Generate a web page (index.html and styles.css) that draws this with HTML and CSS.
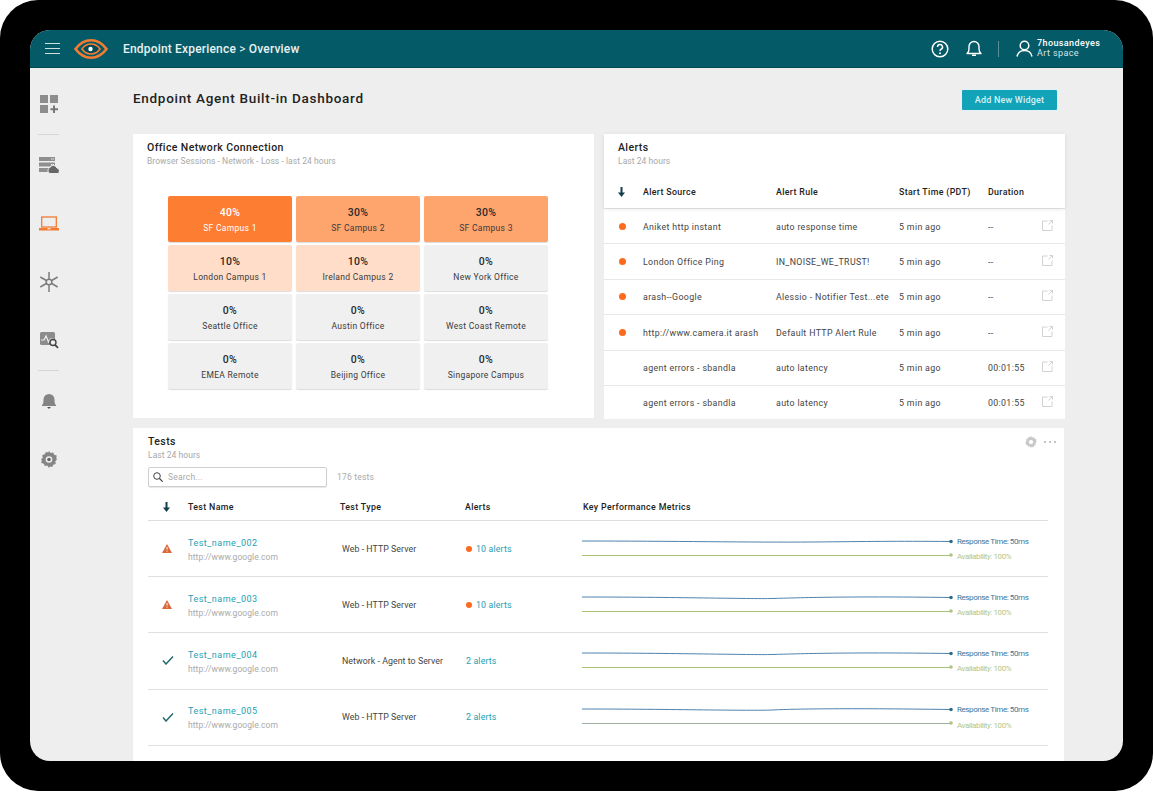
FILE: index.html
```html
<!DOCTYPE html>
<html lang="en">
<head>
<meta charset="utf-8">
<title>Endpoint Agent Built-in Dashboard</title>
<link rel="stylesheet" href="styles.css">
</head>
<body>
<div class="frame">
<div class="screen">
  <header class="topbar">
    <svg class="burger" width="15" height="11" viewBox="0 0 15 11"><path d="M0 .5h15M0 5.500h15M0 10.500h15" stroke="#cfe0e3" fill="none"/></svg>
    <svg class="logo" width="34" height="20" viewBox="0 0 34 20" fill="none"><path d="M1.500 10 C6 4 11 1.300 17 1.300 C23 1.300 28 4 32.500 10 C28 16 23 18.700 17 18.700 C11 18.700 6 16 1.500 10Z" stroke="#f47b32" stroke-width="2.600"/><path d="M8 10c2.300-3.300 5.500-5 9-5s6.700 1.700 9 5c-2.300 3.300-5.500 5-9 5s-6.700-1.700-9-5Z" fill="#034a55" stroke="#f47b32" stroke-width="1.700"/><circle cx="16.500" cy="10" r="2.200" fill="#fff"/></svg>
    <div class="crumb">Endpoint Experience <span class="crumb-sep">&gt;</span> Overview</div>
    <div class="top-actions">
      <svg width="18" height="18" viewBox="0 0 18 18" fill="none"><circle cx="9" cy="9" r="7.800" stroke="#fff" stroke-width="1.500"/><path d="M6.500 7a2.500 2.500 0 1 1 3.700 2.200c-.8.500-1.200.9-1.200 1.800" stroke="#fff" stroke-width="1.500"/><circle cx="9" cy="13.300" r="1" fill="#fff"/></svg>
      <svg class="bell-top" width="16" height="17" viewBox="0 0 16 17" fill="none"><path d="M1 13.500c1.500-1 2-2.500 2-4.500V6.500a5 5 0 0 1 10 0V9c0 2 .5 3.500 2 4.500Z" stroke="#fff" stroke-width="1.400" stroke-linejoin="round"/><path d="M6 15.300h4" stroke="#fff" stroke-width="1.500"/></svg>
      <span class="top-sep"></span>
      <svg class="user-ic" width="17" height="17" viewBox="0 0 17 17" fill="none"><circle cx="8.500" cy="5.500" r="4.300" stroke="#fff" stroke-width="1.500"/><path d="M1 16.500c.8-3.800 3.500-6 7.500-6s6.700 2.200 7.500 6" stroke="#fff" stroke-width="1.500"/></svg>
      <div class="user"><div class="user-name">7housandeyes</div><div class="user-org">Art space</div></div>
    </div>
  </header>
  <div class="body">
    <nav class="side">
      <div class="nav-slot"><svg width="20" height="20" viewBox="0 0 20 20"><path fill="#8d8d8d" d="M1 1h8v8H1zM11 1h8v8h-8zM1 11h8v8H1z"/><path d="M15 11.500v7.500M11.500 15.200h7.500" stroke="#777" stroke-width="2"/></svg></div>
      <span class="nav-rule"></span>
      <div class="nav-slot"><svg width="20" height="18" viewBox="0 0 20 18"><path fill="#8f8f8f" d="M0 1h16v4H0zM0 6.500h16v4H0zM0 12h11v4H0z"/><path fill="#eee" d="M12 2.500h1.500v1H12zM14 2.500h1v1h-1zM12 8h1.500v1H12zM14 8h1v1h-1z"/><path fill="#666" stroke="#eee" d="M11 17.500a3 3 0 0 1-.5-5.500 4 4 0 0 1 7.500 0 3 3 0 0 1 1 5.500Z"/></svg></div>
      <div class="nav-slot nav-gap"><svg width="20" height="15" viewBox="0 0 20 15" fill="none"><rect x="2.700" y="1" width="14.600" height="10" stroke="#f47b32" stroke-width="1.300"/><path d="M0 12h20v2.500H0z" fill="#f47b32"/><path d="M8.500 12.800h3" stroke="#fff"/></svg></div>
      <div class="nav-slot nav-gap"><svg width="20" height="20" viewBox="0 0 20 20" fill="none"><g stroke="#7d7d7d" stroke-width="1.500"><path d="M10 0v7M10 13v7M1.300 5l6 3.500M12.700 11.500l6 3.500M18.700 5l-6 3.500M7.300 11.500l-6 3.500"/><circle cx="10" cy="10" r="2.800"/></g></svg></div>
      <div class="nav-slot nav-gap"><svg width="19" height="17" viewBox="0 0 19 17" fill="none"><rect y="0" width="15" height="13" rx="1.500" fill="#8c8c8c"/><path d="M1 8h3l2-4 2.500 6 2-3h3" stroke="#eee" stroke-width="1.200"/><circle cx="13" cy="10.500" r="3" fill="#eee" stroke="#444" stroke-width="1.400"/><path d="M15 12.800l3 3" stroke="#444" stroke-width="1.700"/></svg></div>
      <span class="nav-rule"></span>
      <div class="nav-slot"><svg width="14" height="16" viewBox="0 0 14 16"><path fill="#848484" d="M0 12c1.200-1 1.500-2.500 1.500-5.500a5.500 5.500 0 0 1 11 0c0 3 .3 4.500 1.500 5.500v1H0Z"/><path fill="#555" d="M5 14h4l-2 2Z"/></svg></div>
      <div class="nav-slot nav-gap"><svg width="16" height="17" viewBox="0 0 16 17" fill="none"><path fill="#858585" d="M8 0l1.700 2 2.500-.6 1 2.400 2.500.8-.4 2.600L16 8.500l-1.700 1.800.4 2.600-2.500.8-1 2.400-2.500-.6L8 17l-1.700-2.500-2.500.6-1-2.400-2.500-.8.400-2.600L0 8.500l1.700-1.800-.4-2.600 2.500-.8 1-2.400 2.500.6Z"/><circle cx="8" cy="8.500" r="3.300" fill="#eee"/><circle cx="8" cy="8.500" r="1.800" fill="#666"/></svg></div>
    </nav>
    <main class="main">
      <div class="title-row">
        <h1 class="page-title">Endpoint Agent Built-in Dashboard</h1>
        <button class="add-btn" type="button">Add New Widget</button>
      </div>
      <div class="cards">
        <section class="card office">
          <h2 class="card-title">Office Network Connection</h2>
          <p class="card-sub">Browser Sessions - Network - Loss - last 24 hours</p>
          <div class="heat">
            <div class="tile t40"><b>40%</b><span>SF Campus 1</span></div>
            <div class="tile t30"><b>30%</b><span>SF Campus 2</span></div>
            <div class="tile t30"><b>30%</b><span>SF Campus 3</span></div>
            <div class="tile t10"><b>10%</b><span>London Campus 1</span></div>
            <div class="tile t10"><b>10%</b><span>Ireland Campus 2</span></div>
            <div class="tile"><b>0%</b><span>New York Office</span></div>
            <div class="tile"><b>0%</b><span>Seattle Office</span></div>
            <div class="tile"><b>0%</b><span>Austin Office</span></div>
            <div class="tile"><b>0%</b><span>West Coast Remote</span></div>
            <div class="tile"><b>0%</b><span>EMEA Remote</span></div>
            <div class="tile"><b>0%</b><span>Beijing Office</span></div>
            <div class="tile"><b>0%</b><span>Singapore Campus</span></div>
          </div>
        </section>
        <section class="card alerts">
          <div class="alerts-head">
            <h2 class="card-title">Alerts</h2>
            <p class="card-sub">Last 24 hours</p>
            <div class="a-row a-hdr">
              <svg class="sort-a" width="7" height="10" viewBox="0 0 7 10"><path d="M3.500 0v8" stroke="#123f4a" stroke-width="2"/><path d="M0 5.500h7L3.500 10Z" fill="#123f4a"/></svg>
              <span>Alert Source</span><span>Alert Rule</span><span>Start Time (PDT)</span><span>Duration</span>
            </div>
          </div>
          <div class="a-row a-item"><i class="dot"></i><span>Aniket http instant</span><span>auto response time</span><span>5 min ago</span><span>--</span><svg class="ext" width="11" height="11" viewBox="0 0 11 11" fill="none"><path d="M5.500 1H.5v9.500H10V5.500M6.500 4.500 10.500.5M7.500.5h3v3" stroke="#d2d2d2"/></svg></div>
          <div class="a-row a-item"><i class="dot"></i><span>London Office Ping</span><span>IN_NOISE_WE_TRUST!</span><span>5 min ago</span><span>--</span><svg class="ext" width="11" height="11" viewBox="0 0 11 11" fill="none"><path d="M5.500 1H.5v9.500H10V5.500M6.500 4.500 10.500.5M7.500.5h3v3" stroke="#d2d2d2"/></svg></div>
          <div class="a-row a-item"><i class="dot"></i><span>arash--Google</span><span>Alessio - Notifier Test...ete</span><span>5 min ago</span><span>--</span><svg class="ext" width="11" height="11" viewBox="0 0 11 11" fill="none"><path d="M5.500 1H.5v9.500H10V5.500M6.500 4.500 10.500.5M7.500.5h3v3" stroke="#d2d2d2"/></svg></div>
          <div class="a-row a-item"><i class="dot"></i><span>http://www.camera.it arash</span><span>Default HTTP Alert Rule</span><span>5 min ago</span><span>--</span><svg class="ext" width="11" height="11" viewBox="0 0 11 11" fill="none"><path d="M5.500 1H.5v9.500H10V5.500M6.500 4.500 10.500.5M7.500.5h3v3" stroke="#d2d2d2"/></svg></div>
          <div class="a-row a-item"><i></i><span>agent errors - sbandla</span><span>auto latency</span><span>5 min ago</span><span>00:01:55</span><svg class="ext" width="11" height="11" viewBox="0 0 11 11" fill="none"><path d="M5.500 1H.5v9.500H10V5.500M6.500 4.500 10.500.5M7.500.5h3v3" stroke="#d2d2d2"/></svg></div>
          <div class="a-row a-item a-last"><i></i><span>agent errors - sbandla</span><span>auto latency</span><span>5 min ago</span><span>00:01:55</span><svg class="ext" width="11" height="11" viewBox="0 0 11 11" fill="none"><path d="M5.500 1H.5v9.500H10V5.500M6.500 4.500 10.500.5M7.500.5h3v3" stroke="#d2d2d2"/></svg></div>
        </section>
      </div>
      <section class="card tests">
        <div class="tests-tools">
          <svg width="12" height="12" viewBox="0 0 16 17"><path fill="#c9c9c9" d="M8 0l1.700 2 2.500-.6 1 2.400 2.500.8-.4 2.600L16 8.500l-1.700 1.800.4 2.600-2.500.8-1 2.400-2.500-.6L8 17l-1.700-2.500-2.500.6-1-2.400-2.500-.8.400-2.600L0 8.500l1.700-1.800-.4-2.600 2.500-.8 1-2.400 2.500.6Z"/><circle cx="8" cy="8.500" r="3" fill="#fff"/></svg>
          <svg width="12" height="3" viewBox="0 0 12 3"><path fill="#c4c4c4" d="M0 0h2v2H0zM5 0h2v2H5zM10 0h2v2h-2z"/></svg>
        </div>
        <h2 class="card-title">Tests</h2>
        <p class="card-sub">Last 24 hours</p>
        <div class="search-row">
          <div class="search">
            <svg width="10" height="10" viewBox="0 0 10 10" fill="none"><circle cx="4" cy="4" r="3.300" stroke="#444"/><path d="M6.500 6.500 9.700 9.700" stroke="#444" stroke-width="1.200"/></svg>
            <span>Search...</span>
          </div>
          <span class="count">176 tests</span>
        </div>
        <div class="t-row t-hdr">
          <svg class="sort-t" width="7" height="10" viewBox="0 0 7 10"><path d="M3.500 0v8" stroke="#123f4a" stroke-width="2"/><path d="M0 5.500h7L3.500 10Z" fill="#123f4a"/></svg>
          <span>Test Name</span><span>Test Type</span><span>Alerts</span><span>Key Performance Metrics</span>
        </div>

        <div class="t-row t-item">
          <svg class="st" width="10" height="9" viewBox="0 0 10 9"><path d="M5 0 10 9H0Z" fill="#d9683a"/><path d="M5 3v2.500M5 6.500v1" stroke="#fff"/></svg>
          <div class="t-cell"><a class="t-name">Test_name_002</a><div class="t-url">http://www.google.com</div></div>
          <span class="t-type">Web - HTTP Server</span>
          <span class="t-alert"><i class="dot"></i><a>10 alerts</a></span>
          <div class="kpi">
            <div class="kpi-line"><svg width="371" height="7" viewBox="0 0 371 7" fill="none"><path d="M0 3C90 3 170 4.500 230 4S310 3 368 3.500" stroke="#4f82ae"/><circle cx="369" cy="3.500" r="1.800" fill="#2f6b86"/></svg><span class="kpi-blue">Response Time: 50ms</span></div>
            <div class="kpi-line"><svg width="371" height="7" viewBox="0 0 371 7" fill="none"><path d="M0 3.500H368" stroke="#a9c274" stroke-width="1.200"/><circle cx="369" cy="3" r="1.800" fill="#aec383"/></svg><span class="kpi-green">Availability: 100%</span></div>
          </div>
        </div>
        <div class="t-row t-item">
          <svg class="st" width="10" height="9" viewBox="0 0 10 9"><path d="M5 0 10 9H0Z" fill="#d9683a"/><path d="M5 3v2.500M5 6.500v1" stroke="#fff"/></svg>
          <div class="t-cell"><a class="t-name">Test_name_003</a><div class="t-url">http://www.google.com</div></div>
          <span class="t-type">Web - HTTP Server</span>
          <span class="t-alert"><i class="dot"></i><a>10 alerts</a></span>
          <div class="kpi">
            <div class="kpi-line"><svg width="371" height="7" viewBox="0 0 371 7" fill="none"><path d="M0 3C90 3 170 5 190 4.500S260 2 368 3.500" stroke="#4f82ae"/><circle cx="369" cy="3.500" r="1.800" fill="#2f6b86"/></svg><span class="kpi-blue">Response Time: 50ms</span></div>
            <div class="kpi-line"><svg width="371" height="7" viewBox="0 0 371 7" fill="none"><path d="M0 3.500H368" stroke="#a9c274" stroke-width="1.200"/><circle cx="369" cy="3" r="1.800" fill="#aec383"/></svg><span class="kpi-green">Availability: 100%</span></div>
          </div>
        </div>
        <div class="t-row t-item">
          <svg class="st" width="12" height="9" viewBox="0 0 12 9" fill="none"><path d="M1 4.500 4 8l7-7.500" stroke="#24686f" stroke-width="1.500"/></svg>
          <div class="t-cell"><a class="t-name">Test_name_004</a><div class="t-url">http://www.google.com</div></div>
          <span class="t-type">Network - Agent to Server</span>
          <span class="t-alert"><a>2 alerts</a></span>
          <div class="kpi">
            <div class="kpi-line"><svg width="371" height="7" viewBox="0 0 371 7" fill="none"><path d="M0 3C90 3 170 5 190 4.500S260 2 368 3.500" stroke="#4f82ae"/><circle cx="369" cy="3.500" r="1.800" fill="#2f6b86"/></svg><span class="kpi-blue">Response Time: 50ms</span></div>
            <div class="kpi-line"><svg width="371" height="7" viewBox="0 0 371 7" fill="none"><path d="M0 3.500H368" stroke="#a9c274" stroke-width="1.200"/><circle cx="369" cy="3" r="1.800" fill="#aec383"/></svg><span class="kpi-green">Availability: 100%</span></div>
          </div>
        </div>
        <div class="t-row t-item">
          <svg class="st" width="12" height="9" viewBox="0 0 12 9" fill="none"><path d="M1 4.500 4 8l7-7.500" stroke="#24686f" stroke-width="1.500"/></svg>
          <div class="t-cell"><a class="t-name">Test_name_005</a><div class="t-url">http://www.google.com</div></div>
          <span class="t-type">Web - HTTP Server</span>
          <span class="t-alert"><a>2 alerts</a></span>
          <div class="kpi">
            <div class="kpi-line"><svg width="371" height="7" viewBox="0 0 371 7" fill="none"><path d="M0 3C90 3 170 5 190 4S260 2 368 3.500" stroke="#4f82ae"/><circle cx="369" cy="3.500" r="1.800" fill="#2f6b86"/></svg><span class="kpi-blue">Response Time: 50ms</span></div>
            <div class="kpi-line"><svg width="371" height="7" viewBox="0 0 371 7" fill="none"><path d="M0 3.500H368" stroke="#9db0a0" stroke-width="1.200"/><circle cx="369" cy="3" r="1.800" fill="#aec383"/></svg><span class="kpi-green">Availability: 100%</span></div>
          </div>
        </div>
      </section>
    </main>
  </div>
</div>
</div>
</body>
</html>
```
FILE: styles.css
```css
* { box-sizing: border-box; }
html, body { margin: 0; padding: 0; background: #fff; }
body { width: 1153px; height: 792px; overflow: hidden; font-family: "Roboto", "Liberation Sans", sans-serif; color: #333; }
.frame { width: 1153px; height: 791px; background: #000; border-radius: 38px; padding: 30px; }
.screen { width: 1093px; height: 731px; border-radius: 20px; overflow: hidden; background: #eee; display: flex; flex-direction: column; }

.topbar { height: 38px; flex: none; background: #045a66; border-bottom: 1px solid #03474f; display: flex; align-items: center; padding-left: 15px; color: #fff; }
.logo { margin-left: 14px; }
.crumb { margin-left: 15px; font-size: 12px; font-weight: 500; color: #e8f1f2; letter-spacing: .18px; }
.crumb-sep { font-weight: 400; }
.top-actions { margin-left: auto; display: flex; align-items: center; width: 192px; }
.bell-top { margin-left: 17px; }
.top-sep { width: 1px; height: 16px; background: #5b8f97; margin-left: 16px; }
.user-ic { margin-left: 17px; }
.user { margin-left: 4px; font-size: 9px; line-height: 9.500px; }
.user-name { font-weight: 500; letter-spacing: .4px; }
.user-org { color: #d6e4e6; letter-spacing: .4px; }

.body { flex: 1; min-height: 0; display: flex; }
.side { width: 37px; flex: none; display: flex; flex-direction: column; align-items: center; padding-top: 24px; }
.nav-slot { height: 24px; flex: none; display: flex; align-items: center; justify-content: center; padding-left: 1px; }
.nav-rule { width: 21px; height: 1px; background: #d6d6d6; margin: 18px 0; flex: none; }
.nav-gap { margin-top: 34.400px; }

.main { flex: 1; min-width: 0; padding: 0 58px 0 66px; overflow: hidden; }
.title-row { height: 66px; display: flex; align-items: center; justify-content: space-between; padding-right: 7px; }
.page-title { margin: 0 0 6px; font-size: 13.500px; font-weight: 500; color: #222; letter-spacing: .7px; }
.add-btn { width: 97px; height: 22px; margin-bottom: 3px; border: 1px solid #e3f3f5; border-radius: 2px; background: #12a3b8; color: #d8f1f4; font: 500 9px "Roboto", sans-serif; letter-spacing: .2px; padding: 0; }

.cards { display: flex; gap: 10px; align-items: flex-start; }
.card { background: #fff; }
.card-title { margin: 0; font-size: 10.500px; line-height: 14px; font-weight: 500; color: #222; letter-spacing: .4px; }
.card-sub { margin: 1px 0 0; font-size: 8.500px; line-height: 11px; color: #a8a8a8; letter-spacing: .05px; }

.office { width: 461px; height: 284px; padding: 7px 14px; }
.heat { margin: 29px 0 0 21px; display: grid; grid-template-columns: repeat(3, 124px); grid-auto-rows: 46px; column-gap: 4px; row-gap: 3px; }
.tile { background: #f0f0f0; border-radius: 2px; box-shadow: 0 1px 1px #dcdcdc; display: flex; flex-direction: column; align-items: center; padding-top: 10px; color: #3a3a3a; }
.tile b { font-size: 10.500px; line-height: 13px; font-weight: 500; letter-spacing: .3px; color: #2b2b2b; }
.tile span { font-size: 8.500px; line-height: 11px; margin-top: 4px; letter-spacing: .3px; }
.t40 { background: #fd7d32; color: #fff; } .t40 b { color: #fff; }
.t30 { background: #fea46d; }
.t10 { background: #ffddc8; }

.alerts { width: 461px; height: 285px; }
.alerts-head { height: 74px; padding-top: 7px; box-shadow: 0 1px 4px rgba(0,0,0,.1); position: relative; }
.alerts-head .card-title, .alerts-head .card-sub { margin-left: 14px; }
.a-row { display: grid; grid-template-columns: 39px 133px 123px 89px 54px 11px; align-items: center; font-size: 8.800px; letter-spacing: .35px; color: #444; }
.a-hdr { margin-top: 18px; height: 14px; font-weight: 500; color: #222; }
.sort-a { margin-left: 14px; }
.a-item { height: 35.400px; border-top: 1px solid #e8e8e8; padding-top: 1px; }
.a-last { height: 34px; }
.a-item .dot { margin: -1px 0 0 15px; }
.dot { display: block; width: 7px; height: 7px; border-radius: 50%; background: #fb6a1f; }
.ext { margin-top: -3px; }

.tests { position: relative; width: 931px; margin-top: 9px; height: 360px; padding: 7px 16px 0 15px; }
.tests-tools { position: absolute; top: 8px; right: 8px; display: flex; align-items: center; gap: 7px; }
.tests-tools svg + svg { margin-top: 1px; }
.search-row { display: flex; align-items: center; margin-top: 6px; }
.search { width: 179px; height: 20px; border: 1px solid #cfcfcf; border-radius: 2px; box-shadow: 0 1px 1px #e6e6e6; display: flex; align-items: center; gap: 5px; padding-left: 4px; font-size: 8.500px; color: #aaa; letter-spacing: .2px; }
.count { margin-left: 10px; font-size: 8.500px; color: #aaa; letter-spacing: .2px; }
.t-row { width: 900px; display: grid; grid-template-columns: 40px 152px 125px 118px 1fr; align-items: center; font-size: 8.800px; letter-spacing: .35px; color: #444; }
.t-hdr { height: 34px; font-weight: 500; color: #222; border-bottom: 1px solid #dedede; padding-top: 6px; }
.sort-t { margin-left: 15px; }
.t-item { height: 56.200px; border-bottom: 1px solid #e0e0e0; }
.st { margin-left: 14px; }
.t-cell { padding-top: 2px; }
.t-name { color: #1a9fb3; font-size: 9px; display: block; line-height: 12px; letter-spacing: .5px; }
.t-url { color: #aaa; font-size: 8.500px; line-height: 12px; margin-top: 2px; letter-spacing: .05px; }
.t-type { padding-left: 2px; letter-spacing: .05px; }
.t-alert { display: flex; align-items: center; gap: 4px; padding-left: 1px; color: #1a9fb3; letter-spacing: .15px; }
.t-alert .dot { width: 6px; height: 6px; }
.kpi { display: flex; flex-direction: column; gap: 7px; margin: -1px 0 0 -1px; }
.kpi-line { display: flex; align-items: center; gap: 4px; height: 7px; font-size: 8px; white-space: nowrap; letter-spacing: -.4px; }
.kpi-blue { color: #3f7698; }
.kpi-green { color: #b3c68e; margin-top: 3px; }
```
